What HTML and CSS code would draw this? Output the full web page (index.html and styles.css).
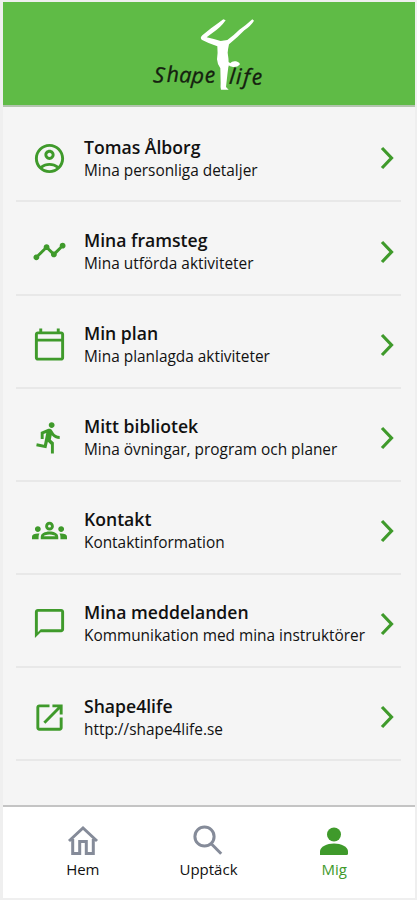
FILE: index.html
```
<!DOCTYPE html>
<html lang="sv">
<head>
    <meta charset="UTF-8">
    <meta name="viewport" content="width=device-width, initial-scale=1.0">
    <title>Shape4life</title>
    <link rel="stylesheet" href="styles.css">
</head>
<body>
    <div class="app">
        <header class="header">
            <svg class="logo" viewBox="0 6 420 312">
                <g class="figure">
                    <path d="M250 58 L257 61 Q241 84 218 98 L200 112 Q222 117 242 123 L262 120 Q281 106 298 89 Q318 76 337 58 L342 62 Q334 76 313 91 Q293 112 267 133 Q264 147 263 158 Q266 175 266 193 L262 225 L258 261 L266 269 H243 Q241 262 242 249 L241 205 Q232 193 231 178 Q234 161 232 139 Q208 131 185 119 Q179 113 187 106 L213 85 Q230 73 250 58Z"/>
                    <path d="M258 183 Q272 189 270 190 Q277 182 288 184 Q301 188 299 194 Q292 202 279 201 Q269 200 266 196 L262 208 H254Z"/>
                </g>
                <text class="logo-text" x="38 80 117 153 195" y="246 246 247 248 249" rotate="6 -2 2 4 -4">Shape</text>
                <text class="logo-text" x="266 287 308 336" y="251 252 252 255" rotate="5 2 4 -4">life</text>
            </svg>
        </header>

        <main class="menu">
            <a class="row">
                <svg class="icon" viewBox="0 0 24 24"><path d="M12 2C6.48 2 2 6.48 2 12s4.48 10 10 10 10-4.48 10-10S17.52 2 12 2zM7.35 18.5C8.66 17.56 10.26 17 12 17s3.34.56 4.65 1.5C15.34 19.44 13.74 20 12 20s-3.34-.56-4.65-1.5zm10.79-1.38C16.45 15.8 14.32 15 12 15s-4.45.8-6.14 2.12C4.7 15.73 4 13.95 4 12c0-4.42 3.58-8 8-8s8 3.58 8 8c0 1.95-.7 3.73-1.86 5.12zM12 6c-1.93 0-3.5 1.57-3.5 3.5S10.07 13 12 13s3.5-1.57 3.5-3.5S13.93 6 12 6zm0 5c-.83 0-1.5-.67-1.5-1.5S11.17 8 12 8s1.5.67 1.5 1.5S12.83 11 12 11z"/></svg>
                <div class="text">
                    <h2>Tomas Ålborg</h2>
                    <p>Mina personliga detaljer</p>
                </div>
                <svg class="chevron" viewBox="0 0 14 24"><path d="M2 2l9.500 10L2 22"/></svg>
            </a>
            <a class="row">
                <svg class="icon" viewBox="0 0 24 24"><path d="M23 8c0 1.100-.9 2-2 2-.18 0-.35-.02-.51-.07l-3.560 3.550c.05.16.07.34.07.52 0 1.100-.9 2-2 2s-2-.9-2-2c0-.18.02-.36.07-.52l-2.550-2.550c-.16.05-.34.07-.52.07s-.36-.02-.52-.07l-4.550 4.560c.05.16.07.33.07.51 0 1.100-.9 2-2 2s-2-.9-2-2 .9-2 2-2c.18 0 .35.02.51.07l4.560-4.550C8.020 9.360 8 9.180 8 9c0-1.100.9-2 2-2s2 .9 2 2c0 .18-.02.36-.07.52l2.550 2.550c.16-.05.34-.07.52-.07s.36.02.52.07l3.550-3.560C19.020 8.350 19 8.180 19 8c0-1.100.9-2 2-2s2 .9 2 2z"/></svg>
                <div class="text">
                    <h2>Mina framsteg</h2>
                    <p>Mina utförda aktiviteter</p>
                </div>
                <svg class="chevron" viewBox="0 0 14 24"><path d="M2 2l9.500 10L2 22"/></svg>
            </a>
            <a class="row">
                <svg class="icon" viewBox="0 0 24 24"><path d="M20 3h-1V1h-2v2H7V1H5v2H4c-1.100 0-2 .9-2 2v16c0 1.100.9 2 2 2h16c1.100 0 2-.9 2-2V5c0-1.100-.9-2-2-2zm0 18H4V10h16v11zm0-13H4V5h16v3z"/></svg>
                <div class="text">
                    <h2>Min plan</h2>
                    <p>Mina planlagda aktiviteter</p>
                </div>
                <svg class="chevron" viewBox="0 0 14 24"><path d="M2 2l9.500 10L2 22"/></svg>
            </a>
            <a class="row">
                <svg class="icon" viewBox="0 0 24 24"><path d="M13.490 5.480c1.100 0 2-.9 2-2s-.9-2-2-2-2 .9-2 2 .9 2 2 2zm-3.600 13.900l1-4.400 2.100 2v6h2v-7.500l-2.100-2 .6-3c1.300 1.500 3.300 2.500 5.500 2.500v-2c-1.900 0-3.500-1-4.300-2.400l-1-1.600c-.4-.6-1-1-1.700-1-.3 0-.5.1-.8.1l-5.200 2.200v4.700h2v-3.400l1.800-.7-1.600 8.100-4.900-1-.4 2 7 1.400z"/></svg>
                <div class="text">
                    <h2>Mitt bibliotek</h2>
                    <p>Mina övningar, program och planer</p>
                </div>
                <svg class="chevron" viewBox="0 0 14 24"><path d="M2 2l9.500 10L2 22"/></svg>
            </a>
            <a class="row">
                <svg class="icon" viewBox="0 0 24 24"><path d="M4 13c1.100 0 2-.9 2-2s-.9-2-2-2-2 .9-2 2 .9 2 2 2zm1.130 1.100c-.37-.06-.74-.1-1.130-.1-.99 0-1.930.21-2.780.58C.48 14.900 0 15.620 0 16.430V18h4.500v-1.610c0-.83.23-1.610.63-2.290zM20 13c1.100 0 2-.9 2-2s-.9-2-2-2-2 .9-2 2 .9 2 2 2zm4 3.430c0-.81-.48-1.530-1.220-1.850-.85-.37-1.790-.58-2.780-.58-.39 0-.76.04-1.130.1.4.68.63 1.460.63 2.290V18H24v-1.570zm-7.760-2.780c-1.170-.52-2.610-.9-4.240-.9-1.630 0-3.070.39-4.240.9C6.680 14.130 6 15.210 6 16.390V18h12v-1.610c0-1.180-.68-2.260-1.760-2.740zM8.070 16c.09-.23.13-.39.91-.69.97-.38 1.990-.56 3.020-.56s2.050.18 3.020.56c.77.3.81.46.91.69H8.070zM12 8c.55 0 1 .45 1 1s-.45 1-1 1-1-.45-1-1 .45-1 1-1m0-2c-1.660 0-3 1.340-3 3s1.340 3 3 3 3-1.340 3-3-1.340-3-3-3z"/></svg>
                <div class="text">
                    <h2>Kontakt</h2>
                    <p>Kontaktinformation</p>
                </div>
                <svg class="chevron" viewBox="0 0 14 24"><path d="M2 2l9.500 10L2 22"/></svg>
            </a>
            <a class="row">
                <svg class="icon" viewBox="0 0 24 24"><path d="M20 2H4c-1.100 0-2 .9-2 2v18l4-4h14c1.100 0 2-.9 2-2V4c0-1.100-.9-2-2-2zm0 14H6l-2 2V4h16v12z"/></svg>
                <div class="text">
                    <h2>Mina meddelanden</h2>
                    <p>Kommunikation med mina instruktörer</p>
                </div>
                <svg class="chevron" viewBox="0 0 14 24"><path d="M2 2l9.500 10L2 22"/></svg>
            </a>
            <a class="row">
                <svg class="icon" viewBox="0 0 24 24"><path d="M19 19H5V5h7V3H5c-1.110 0-2 .9-2 2v14c0 1.100.89 2 2 2h14c1.100 0 2-.9 2-2v-7h-2v7zM14 3v2h3.590l-9.830 9.830 1.410 1.410L19 6.410V10h2V3h-7z"/></svg>
                <div class="text">
                    <h2>Shape4life</h2>
                    <p>http://shape4life.se</p>
                </div>
                <svg class="chevron" viewBox="0 0 14 24"><path d="M2 2l9.500 10L2 22"/></svg>
            </a>
        </main>

        <nav class="tabs">
            <a class="tab">
                <svg viewBox="0 0 32 32"><path class="line" d="M2 17L16 4l14 13M5.700 15v14.500h7V17.500h6.600v12h7V15"/></svg>
                <span>Hem</span>
            </a>
            <a class="tab">
                <svg viewBox="0 0 32 32"><circle class="line" cx="11.500" cy="12.500" r="9.600"/><path class="line" d="M18.500 20l9.700 9.700"/></svg>
                <span>Upptäck</span>
            </a>
            <a class="tab active">
                <svg viewBox="0 0 32 32"><circle cx="16" cy="10.500" r="7"/><path d="M2 31v-3.500c0-5 7-8 14-8s14 3 14 8v2q0 1.500-1.500 1.500z"/></svg>
                <span>Mig</span>
            </a>
        </nav>
    </div>
</body>
</html>
```
FILE: styles.css
```
body {
    margin: 0;
    padding: 2px 2px 2px 3px;
    height: 900px;
    box-sizing: border-box;
    background-color: #efefef;
    font-family: "Open Sans", sans-serif;
    color: #111;
}

.app {
    display: flex;
    flex-direction: column;
    height: 100%;
    background-color: #f5f5f5;
}

.header {
    display: flex;
    justify-content: center;
    height: 103px;
    background-color: #5fbb46;
    border-bottom: 2px solid #b3c4ae;
}

.logo {
    width: 140px;
    height: 104px;
    margin-left: 2px;
}

.figure {
    fill: #fff;
}

.logo-text {
    font-family: "Open Sans", sans-serif;
    font-size: 65px;
    font-style: italic;
    font-weight: 500;
    fill: #14200f;
    stroke: #14200f;
    stroke-width: 1;
    stroke-linejoin: round;
}

.menu {
    flex: 1;
    padding: 2.400px 14px 0 13px;
}

.row {
    display: flex;
    align-items: center;
    height: 93.100px;
    padding: 0 7px 0 16px;
    box-sizing: border-box;
    border-bottom: 2px solid #e8e8e8;
}

.icon {
    width: 35px;
    height: 35px;
    margin-top: 7px;
    margin-right: 17px;
    fill: #3f9a2b;
}

.text {
    flex: 1;
    padding-top: 8px;
    white-space: nowrap;
}

h2 {
    margin: 0;
    font-size: 17.6px;
    line-height: 23px;
    font-weight: 600;
}

p {
    margin: 0;
    font-size: 15.4px;
    line-height: 23px;
}

.chevron {
    width: 14px;
    height: 24px;
    margin-top: 7px;
    fill: none;
    stroke: #3f9a2b;
    stroke-width: 3.2;
}

.tabs {
    display: flex;
    height: 91px;
    padding: 0 18px 0 17px;
    background-color: #fff;
    border-top: 2px solid #c4c4c4;
}

.tab {
    display: flex;
    flex: 1;
    flex-direction: column;
    align-items: center;
    padding-top: 17px;
    font-size: 15px;
    line-height: 20px;
}

.tab svg {
    width: 32px;
    height: 32px;
    margin-bottom: 3px;
}

.line {
    fill: none;
    stroke: #858b99;
    stroke-width: 3;
}

.active {
    color: #3f9a2b;
    fill: #3f9a2b;
}
```
